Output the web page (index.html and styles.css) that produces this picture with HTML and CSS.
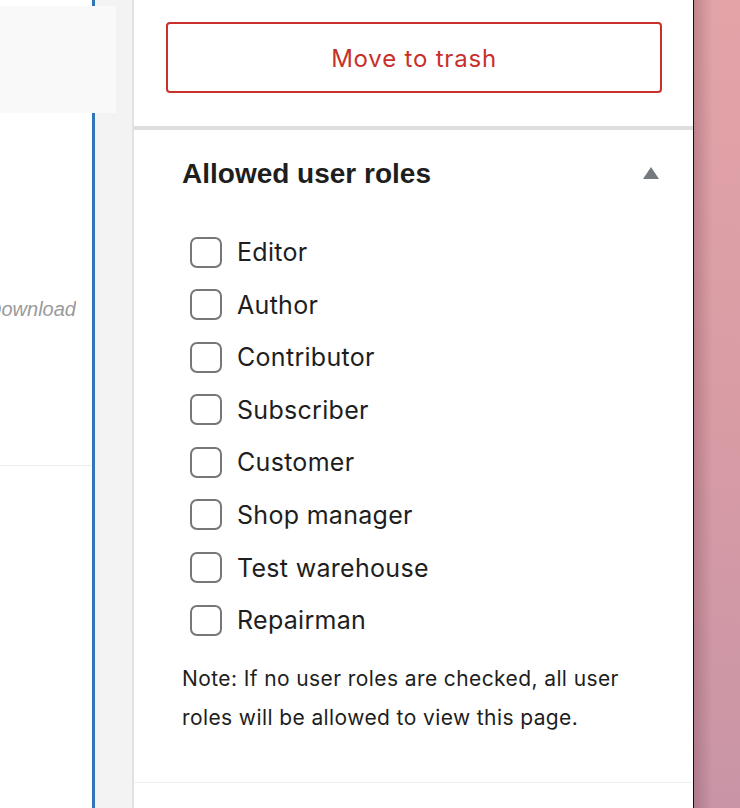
FILE: index.html
```html
<!DOCTYPE html>
<html lang="en">
<head>
<meta charset="utf-8">
<title>Allowed user roles</title>
<link rel="stylesheet" href="styles.css">
</head>
<body>
<div class="screen">
  <div class="editor">
    <div class="popover"></div>
    <div class="editor-body">
      <p class="hint">Download</p>
      <div class="hint-rule"></div>
    </div>
  </div>
  <div class="gutter"></div>
  <aside class="sidebar">
    <div class="trash-panel">
      <button class="trash-btn" type="button">Move to trash</button>
    </div>
    <section class="roles-panel">
      <div class="roles-head">
        <h2 class="roles-title">Allowed user roles</h2>
        <span class="caret"></span>
      </div>
      <ul class="roles-list">
        <li class="role"><span class="box"></span><span class="role-name">Editor</span></li>
        <li class="role"><span class="box"></span><span class="role-name">Author</span></li>
        <li class="role"><span class="box"></span><span class="role-name">Contributor</span></li>
        <li class="role"><span class="box"></span><span class="role-name">Subscriber</span></li>
        <li class="role"><span class="box"></span><span class="role-name">Customer</span></li>
        <li class="role"><span class="box"></span><span class="role-name">Shop manager</span></li>
        <li class="role"><span class="box"></span><span class="role-name">Test warehouse</span></li>
        <li class="role"><span class="box"></span><span class="role-name">Repairman</span></li>
      </ul>
      <p class="note">Note: If no user roles are checked, all user roles will be allowed to view this page.</p>
    </section>
    <div class="next-panel"></div>
  </aside>
  <div class="desktop"></div>
</div>
</body>
</html>
```

FILE: styles.css
```css
* { box-sizing: border-box; }
html, body { margin: 0; padding: 0; }
body {
  width: 740px;
  height: 808px;
  overflow: hidden;
  font-family: Inter, "Noto Sans", sans-serif;
  color: #1e1e1e;
  background: #fff;
}
.screen {
  display: flex;
  height: 808px;
}
.editor {
  position: relative;
  width: 95px;
  flex: none;
  background: #fff;
  border-right: 3px solid #3276b7;
}
.editor-body {
  width: 92px;
  overflow: hidden;
  padding-top: 296px;
}
.hint {
  margin: 0;
  font-family: "Liberation Sans", Arial, sans-serif;
  font-style: italic;
  font-size: 20px;
  line-height: 26px;
  color: #9a9a9a;
  white-space: nowrap;
  direction: rtl;
  text-align: left;
  width: 76px;
  height: 30px;
  overflow: hidden;
}
.hint-rule {
  margin-top: 139px;
  height: 1px;
  background: #ececec;
}
.popover {
  position: absolute;
  left: 0;
  top: 6px;
  width: 116px;
  height: 107px;
  background: #f9f9f9;
  z-index: 2;
}
.gutter {
  width: 39px;
  flex: none;
  background: #f3f3f3;
  border-right: 2px solid #e2e2e2;
}
.sidebar {
  width: 560px;
  flex: none;
  background: #fff;
  border-right: 1px solid #111;
  display: flex;
  flex-direction: column;
}
.trash-panel {
  padding: 22px 31px 0 32px;
  height: 130px;
  border-bottom: 4px solid #dedede;
}
.trash-btn {
  display: block;
  width: 100%;
  height: 71px;
  background: #fff;
  border: 2px solid #c7302b;
  border-radius: 4px;
  color: #c7302b;
  font-family: Inter, "Noto Sans", sans-serif;
  font-size: 24px;
  letter-spacing: 0.8px;
  padding: 2px 0 0;
}
.roles-panel {
  padding: 0 30px 0 48px;
  height: 653px;
  border-bottom: 1px solid #f0f0f0;
}
.roles-head {
  display: flex;
  align-items: center;
  justify-content: space-between;
  height: 88px;
  padding-right: 4px;
}
.roles-title {
  margin: 0;
  font-family: "Liberation Sans", Arial, sans-serif;
  font-weight: bold;
  font-size: 28px;
  color: #1e1e1e;
}
.caret {
  width: 0;
  height: 0;
  border-left: 8px solid transparent;
  border-right: 8px solid transparent;
  border-bottom: 12px solid #757a80;
  margin-top: -2px;
}
.roles-list {
  list-style: none;
  margin: 0;
  padding: 18px 0 0 8px;
  display: flex;
  flex-direction: column;
  gap: 20.6px;
}
.role {
  display: flex;
  align-items: center;
  gap: 15px;
  height: 32px;
}
.box {
  width: 32px;
  height: 31px;
  border: 2px solid #777;
  border-radius: 7px;
  background: #fff;
  flex: none;
}
.role-name {
  font-size: 25px;
  letter-spacing: 0.3px;
  color: #1e1e1e;
}
.note {
  margin: 24px 0 0;
  font-size: 21px;
  letter-spacing: 0.4px;
  line-height: 38.5px;
  color: #1e1e1e;
}
.next-panel {
  flex: 1;
}
.desktop {
  flex: 1;
  background:
    linear-gradient(to right, rgba(110, 60, 75, 0.3), rgba(0,0,0,0) 40%),
    linear-gradient(to bottom, #e3a4a8 0%, #d99ca5 50%, #c995a6 100%);
}
```
